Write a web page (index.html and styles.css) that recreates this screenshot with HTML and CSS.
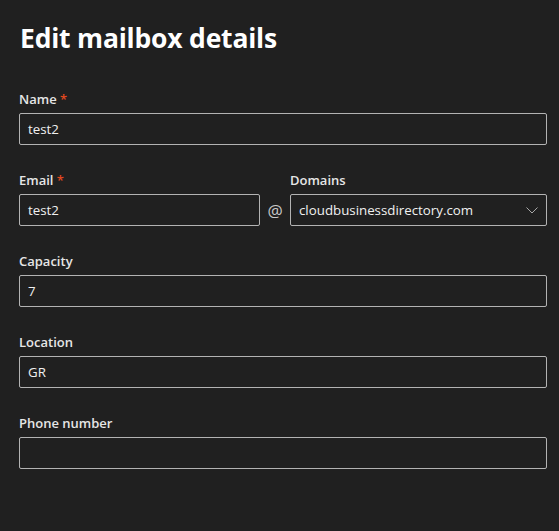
FILE: index.html
```html
<!DOCTYPE html>
<html>
<head>
<meta charset="utf-8">
<link rel="stylesheet" href="styles.css">
</head>
<body>
<div class="panel">
  <h1 class="title">Edit mailbox details</h1>
  <div class="field">
    <label class="label">Name <span class="req">*</span></label>
    <div class="input">test2</div>
  </div>
  <div class="field-row">
    <div class="field email">
      <label class="label">Email <span class="req">*</span></label>
      <div class="input">test2</div>
    </div>
    <div class="at">@</div>
    <div class="field domain">
      <label class="label">Domains</label>
      <div class="input select">
        <span>cloudbusinessdirectory.com</span>
        <svg class="chev" width="12" height="7" viewBox="0 0 12 7"><path d="M0.5 0.5 L6 6 L11.5 0.5" fill="none" stroke="#a8a8a8" stroke-width="1"/></svg>
      </div>
    </div>
  </div>
  <div class="field">
    <label class="label">Capacity</label>
    <div class="input">7</div>
  </div>
  <div class="field">
    <label class="label">Location</label>
    <div class="input">GR</div>
  </div>
  <div class="field">
    <label class="label">Phone number</label>
    <div class="input"></div>
  </div>
</div>
</body>
</html>
```
FILE: styles.css
```css
html, body {
  margin: 0;
  padding: 0;
  background: #202020;
}
body {
  font-family: "Open Sans", "Noto Sans", sans-serif;
  color: #ffffff;
}
.panel {
  padding: 20px 12px 0 19px;
  display: flex;
  flex-direction: column;
}
.title {
  margin: 0 0 33px 1px;
  font-size: 26.5px;
  font-weight: 700;
  line-height: 36px;
  letter-spacing: -0.2px;
  color: #ffffff;
}
.field {
  display: flex;
  flex-direction: column;
  margin-bottom: 25px;
}
.field-row {
  display: flex;
  align-items: flex-end;
}
.field-row .email {
  flex: 241 1 0;
}
.field-row .domain {
  flex: 257 1 0;
}
.at {
  width: 30px;
  height: 32px;
  margin-bottom: 25px;
  display: flex;
  align-items: center;
  justify-content: center;
  font-size: 17px;
  color: #c8c8c8;
}
.label {
  font-size: 13px;
  font-weight: 600;
  line-height: 20px;
  height: 20px;
  margin-bottom: 4px;
  color: #e6e6e6;
}
.req {
  color: #e0481f;
}
.input {
  box-sizing: border-box;
  height: 32px;
  border: 1px solid #b3b3b3;
  border-radius: 2px;
  padding: 0 8px;
  display: flex;
  align-items: center;
  font-size: 13.3px;
  color: #f0f0f0;
}
.select {
  justify-content: space-between;
  padding-right: 8px;
}
```
